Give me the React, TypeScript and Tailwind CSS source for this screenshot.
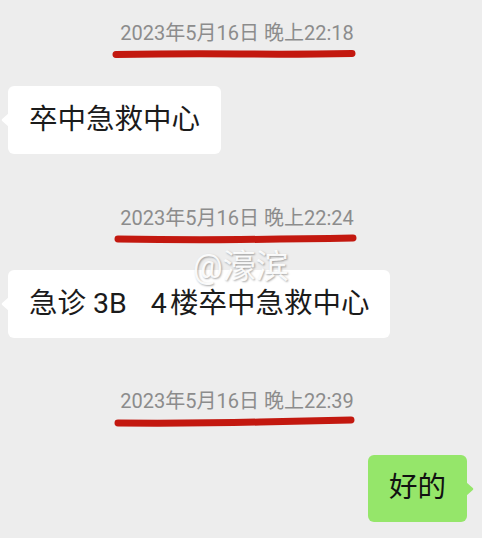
import React from "react";

const FONT = { fontFamily: 'Roboto, "Noto Sans CJK SC", "Noto Sans", sans-serif' };

function Stamp({ text, path }: { text: string; path: string }) {
  return (
    <div className="flex flex-col">
      <div className="h-6 flex items-center justify-center pr-[8px] text-[20px] leading-6 text-[#8c8c8c]">
        {text}
      </div>
      <svg width="482" height="14" viewBox="0 0 482 14" className="mt-[2px] block">
        <path d={path} stroke="#c3180f" strokeWidth="7" strokeLinecap="round" fill="none" />
      </svg>
    </div>
  );
}

function LeftBubble({ children }: { children: React.ReactNode }) {
  return (
    <div className="flex justify-start pl-2">
      <div className="relative bg-white rounded-[6px] h-[68px] px-[21px] flex items-center text-[28.5px] text-[#1b1b1b] whitespace-pre">
        <svg width="8" height="14" viewBox="0 0 8 14" className="absolute -left-[7px] top-[27px]">
          <path d="M8 0 L1.2 6 Q0 7 1.2 8 L8 14 Z" fill="#ffffff" />
        </svg>
        {children}
      </div>
    </div>
  );
}

export default function App() {
  return (
    <div className="w-[482px] h-[538px] bg-[#ededed] overflow-hidden relative" style={FONT}>
      <div className="flex flex-col pt-[21px]">
        <Stamp text="2023年5月16日 晚上22:18" path="M116 7.5 Q 180 6.5 240 7 T 352 6.5" />
        <div className="mt-[25px]">
          <LeftBubble>卒中急救中心</LeftBubble>
        </div>
        <div className="mt-[52px]">
          <Stamp text="2023年5月16日 晚上22:24" path="M118 7 Q 180 8 240 7.5 T 353 6" />
        </div>
        <div className="mt-[24px]">
          <LeftBubble>
            急诊 3B<span className="inline-block w-[24px]" />4<span className="inline-block w-[3px]" />楼卒中急救中心
          </LeftBubble>
        </div>
        <div className="mt-[51px]">
          <Stamp text="2023年5月16日 晚上22:39" path="M118 8 Q 200 8.5 260 7 T 351 5" />
        </div>
        <div className="mt-[26px] flex justify-end pr-[15px]">
          <div className="relative bg-[#95e66a] rounded-[6px] h-[67px] px-[21px] flex items-center text-[28.5px] text-[#111]">
            <svg width="8" height="14" viewBox="0 0 8 14" className="absolute -right-[7px] top-[27px]">
              <path d="M0 0 L6.8 6 Q8 7 6.8 8 L0 14 Z" fill="#95e66a" />
            </svg>
            好的
          </div>
        </div>
      </div>
      <div
        className="absolute left-[193px] top-[247px] text-[33px] leading-[40px] text-white/90"
        style={{ textShadow: "1px 1px 2px rgba(0,0,0,0.35)" }}
      >
        @濠滨
      </div>
    </div>
  );
}
